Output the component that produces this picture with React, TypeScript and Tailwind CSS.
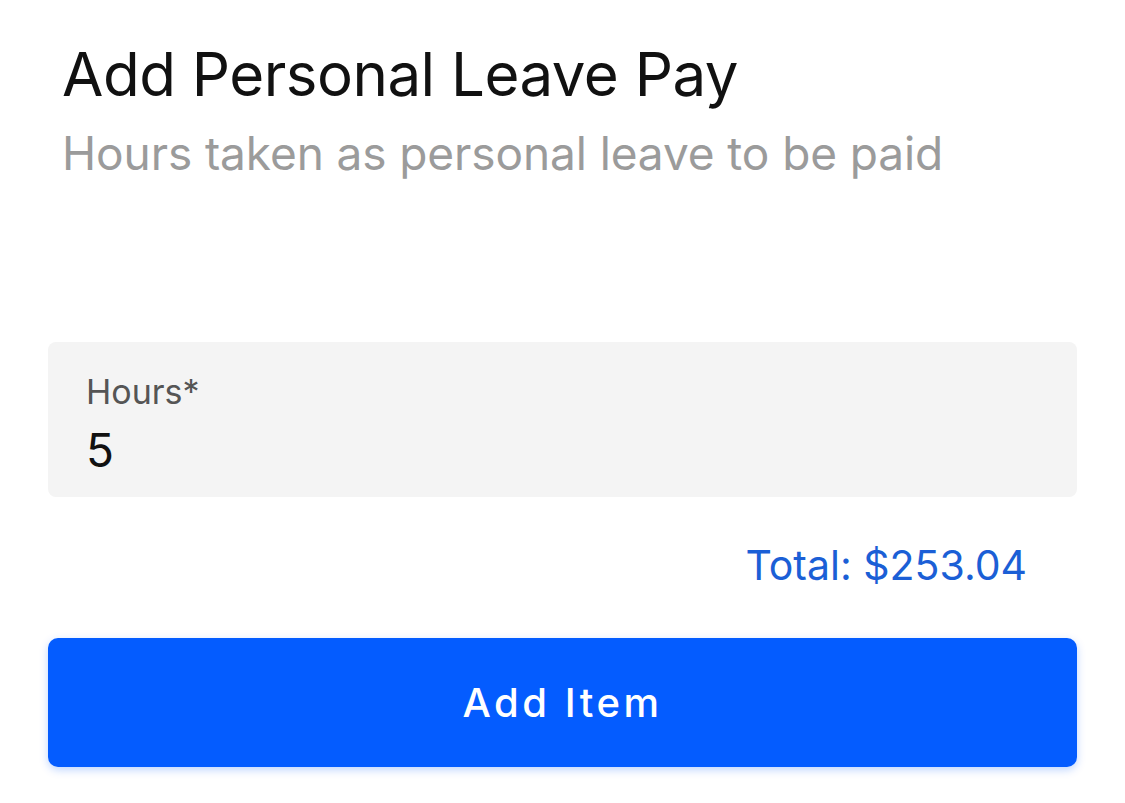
export default function App() {
    return (
        <div
            className="w-[1125px] h-[803px] bg-white overflow-hidden"
            style={{ fontFamily: 'Inter, "Noto Sans", sans-serif' }}
        >
            <div className="px-[48px]">
                <div className="pl-[14px] pt-[36px]">
                    <h1 className="text-[60px] leading-[76px] text-[#111111] tracking-[-0.5px]">
                        Add Personal Leave Pay
                    </h1>
                    <p className="text-[46px] leading-[56px] text-[#9b9b9b] tracking-[-0.1px] mt-[13px]">
                        Hours taken as personal leave to be paid
                    </p>
                </div>

                <div className="mt-[161px] h-[155px] rounded-[8px] bg-[#f4f4f4] pl-[38px] pt-[30px]">
                    <div className="text-[34px] leading-[40px] text-[#555555]">Hours*</div>
                    <div className="text-[46px] leading-[56px] text-[#111111] mt-[10px]">5</div>
                </div>

                <div className="flex justify-end pr-[50px] mt-[40px]">
                    <span className="text-[41px] leading-[56px] text-[#1b5fd6]">Total: $253.04</span>
                </div>

                <button className="mt-[45px] w-full h-[129px] rounded-[10px] bg-[#045cff] text-white text-[40px] font-medium tracking-[3.5px] shadow-[0_3px_8px_rgba(4,92,255,0.25)]">
                    Add Item
                </button>
            </div>
        </div>
    );
}
